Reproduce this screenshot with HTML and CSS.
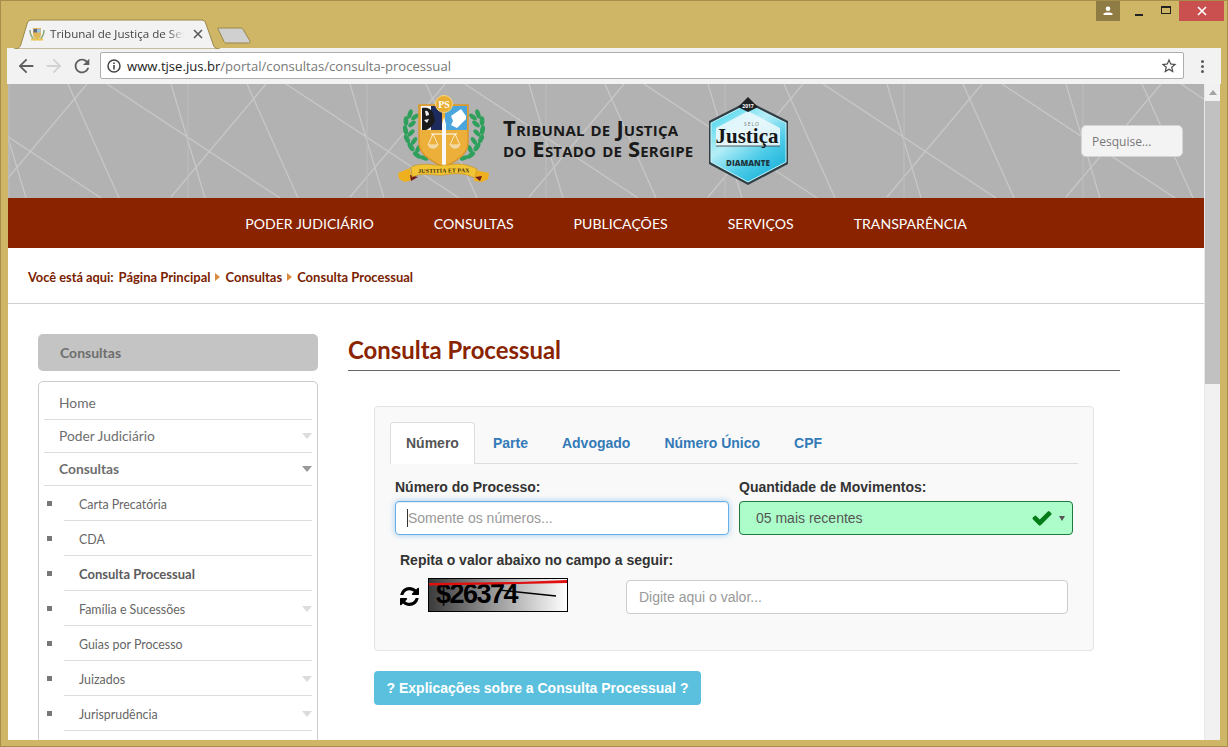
FILE: index.html
```html
<!DOCTYPE html>
<html lang="pt-BR">
<head>
<meta charset="utf-8">
<title>Tribunal de Justiça de Sergipe</title>
<link rel="stylesheet" href="styles.css">
</head>
<body>
<div class="window">
  <div class="titlebar">
    <div class="tab">
      <svg class="tab-shape" viewBox="0 0 206 30"><path d="M0 30C5 30 6 28 7 25L13 5C14 2 15 1 18 1H187C190 1 191 2 192 5L199 25C200 28 201 30 206 30Z" fill="#f2f2f2" stroke="#9a8749"/></svg>
      <svg class="favicon" viewBox="0 0 16 16"><path d="M1 4c0 5 2 8 5 10M15 4c0 5-2 8-5 10" fill="none" stroke="#8aa878" stroke-width="1.500"/><path d="M4 2h8v7c0 2-2 3-4 5-2-2-4-3-4-5z" fill="#e0b85a"/><path d="M4.500 3H8v3.500H4.500z" fill="#666a80"/><path d="M8 3h3.500v3.500H8z" fill="#9cc4e0"/><path d="M2 12.500h12v2H2z" fill="#e6c450"/></svg>
      <span class="tab-title">Tribunal de Justiça de Ser</span>
      <svg class="tab-close" viewBox="0 0 10 10"><path d="M1 1l8 8M9 1l-8 8" stroke="#5a5a5a" stroke-width="1.600"/></svg>
    </div>
    <svg class="newtab" viewBox="0 0 34 17"><path d="M1 1H24C25 1 26 2 26.500 3L33 14C33.500 15.500 33 16 31.500 16H9C8 16 7.500 15.500 7 14.500L1 2C.7 1.400 .6 1 1 1Z" fill="#d0d0d0" stroke="#9a8749"/></svg>
    <div class="winctl">
      <div class="account"><svg viewBox="0 0 10 10" width="10" height="10"><circle cx="5" cy="2.800" r="2.300" fill="#fff"/><path d="M0.500 9V7.500C1.500 6 8.500 6 9.500 7.500V9Z" fill="#fff"/></svg></div>
      <div class="ctl min"><span></span></div>
      <div class="ctl max"><span></span></div>
      <div class="close"><svg viewBox="0 0 10 10" width="10" height="10"><path d="M1 1l8 8M9 1l-8 8" stroke="#fff" stroke-width="1.700"/></svg></div>
    </div>
  </div>

  <div class="toolbar">
    <button class="tool"><svg viewBox="0 0 24 24" width="22" height="22"><path fill="#5f5f5f" d="M20 11H7.830l5.590-5.590L12 4l-8 8 8 8 1.410-1.410L7.830 13H20v-2z"/></svg></button>
    <button class="tool"><svg viewBox="0 0 24 24" width="22" height="22"><path fill="#d2d2d2" d="M4 11h12.170l-5.590-5.590L12 4l8 8-8 8-1.410-1.410L16.170 13H4v-2z"/></svg></button>
    <button class="tool"><svg viewBox="0 0 24 24" width="22" height="22"><path fill="#5f5f5f" d="M17.650 6.350C16.200 4.900 14.210 4 12 4c-4.420 0-7.990 3.580-7.990 8s3.570 8 7.990 8c3.730 0 6.840-2.550 7.730-6h-2.080c-.82 2.330-3.040 4-5.650 4-3.310 0-6-2.690-6-6s2.690-6 6-6c1.660 0 3.140.69 4.220 1.780L13 11h7V4l-2.350 2.350z"/></svg></button>
    <div class="omnibox">
      <svg class="info" viewBox="0 0 14 14" width="14" height="14"><circle cx="7" cy="7" r="6" fill="none" stroke="#444" stroke-width="1.500"/><path d="M6.200 6h1.600v4.500H6.200zM6.200 3.400h1.600V5H6.200z" fill="#444"/></svg>
      <span class="url"><b>www.tjse.jus.br</b>/portal/consultas/consulta-processual</span>
      <svg class="star" viewBox="0 0 24 24" width="18" height="18"><path fill="#4c4c4c" d="M22 9.240l-7.190-.62L12 2 9.190 8.630 2 9.240l5.460 4.730L5.820 21 12 17.270 18.180 21l-1.630-7.030L22 9.240zM12 15.400l-3.760 2.270 1-4.280-3.320-2.880 4.380-.38L12 6.100l1.710 4.040 4.380.38-3.320 2.880 1 4.280L12 15.400z"/></svg>
    </div>
    <div class="menu"><i></i><i></i><i></i></div>
  </div>

  <div class="viewport">
    <div class="page">
      <header class="masthead">
        <svg class="pattern" width="100%" height="114">
          <defs>
            <g id="tile" stroke="#c8c8c8" stroke-width="1.200" fill="none">
              <path d="M60 -4L111 110M79 -4L-16 109M99 -4L272 110M163 -4L197 110"/>
              <path d="M180 -4V110" stroke="#bcbcbc"/>
            </g>
            <pattern id="lines" width="179" height="114" patternUnits="userSpaceOnUse">
              <use href="#tile" x="0" y="4"/>
              <use href="#tile" x="-179" y="4"/>
              <use href="#tile" x="179" y="4"/>
            </pattern>
          </defs>
          <rect width="100%" height="114" fill="url(#lines)"/>
        </svg>
        <svg class="crest" viewBox="0 0 105 100" width="105" height="100">
          <g fill="#2ea05c">
            <g id="laurel">
              <ellipse cx="15" cy="24" rx="2.300" ry="4.800" transform="rotate(20 15 24)"/><ellipse cx="20" cy="27" rx="2.200" ry="4.500" transform="rotate(50 20 27)"/>
              <ellipse cx="11" cy="31" rx="2.400" ry="4.800"/><ellipse cx="17" cy="34" rx="2.200" ry="4.500" transform="rotate(50 17 34)"/>
              <ellipse cx="10.500" cy="40" rx="2.400" ry="4.800" transform="rotate(-10 10.500 40)"/><ellipse cx="16" cy="43" rx="2.200" ry="4.500" transform="rotate(45 16 43)"/>
              <ellipse cx="12" cy="49" rx="2.400" ry="4.800" transform="rotate(-25 12 49)"/><ellipse cx="19" cy="51" rx="2.200" ry="4.500" transform="rotate(35 19 51)"/>
              <ellipse cx="16" cy="57" rx="2.400" ry="4.800" transform="rotate(-35 16 57)"/><ellipse cx="23" cy="59" rx="2.200" ry="4.500" transform="rotate(25 23 59)"/>
              <ellipse cx="22" cy="65" rx="2.400" ry="4.800" transform="rotate(-50 22 65)"/><ellipse cx="29" cy="68" rx="2.200" ry="4.500" transform="rotate(-70 29 68)"/>
            </g>
            <use href="#laurel" transform="matrix(-1 0 0 1 98 0)"/>
          </g>
          <path d="M24 15H73V53C73 65 60 71 49 78C38 71 24 65 24 53Z" fill="#ecb03a" stroke="#d8962c" stroke-width="1.500"/>
          <path d="M26 16H47V40H26Z" fill="#f4f4f4"/>
          <path d="M36 16H47V40H36Z" fill="#1d2a5e"/>
          <path d="M27 18C31 17 36 18 38 23L40 31C38 35 36 38 31 40H27Z" fill="#1b1b1b"/>
          <path d="M30 21C32 20 34 22 34 25L31 26ZM29 30L34 29L32 33Z" fill="#eee"/>
          <path d="M50 16H72V40H50Z" fill="#4aa5dc"/>
          <path d="M56 26L66 19L71 26V29L62 38L56 35L58 31Z" fill="#fff"/>
          <path d="M47 34L49 27L51 34V74L49 77L47 74Z" fill="#f8f8f8"/>
          <path d="M36 44H62" stroke="#fff" stroke-width="1"/>
          <path d="M38 44L33 55H43ZM60 44L55 55H65Z" fill="none" stroke="#fff" stroke-width=".7"/>
          <path d="M33 55C34 60 42 60 43 55ZM55 55C56 60 64 60 65 55Z" fill="#f1d8a0"/>
          <circle cx="49" cy="14" r="8.500" fill="#e8ae32" stroke="#f7d77f"/>
          <text class="crest-ps" x="49" y="18">PS</text>
          <path d="M3 83L15 78L17 90L10 92L4 89Z M94 83L80 80L79 91L87 92L93 89Z" fill="#efb020"/>
          <path d="M15 85L23 87L16 91ZM80 87L87 86L85 91Z" fill="#6e1a1a"/>
          <path d="M16 77C30 71 40 77 52 75C64 73 72 74 82 79L80 88C70 83 62 83 52 84.500C40 87 30 81 17 87Z" fill="#f0c435" stroke="#c98e1b" stroke-width=".6"/>
          <text class="crest-motto" x="49" y="82.500" transform="rotate(-1 49 83)">JUSTITIA ET PAX</text>
        </svg>
        <div class="brand"><span>Tribunal de Justiça</span><span>do Estado de Sergipe</span></div>
        <svg class="seal" viewBox="0 0 95 100" width="95" height="100">
          <defs>
            <linearGradient id="gem" x1="0" y1="0" x2="0.700" y2="1">
              <stop offset="0" stop-color="#30d0ea"/><stop offset=".45" stop-color="#b5eef7"/><stop offset=".75" stop-color="#4ccbe8"/><stop offset="1" stop-color="#1fb4da"/>
            </linearGradient>
          </defs>
          <path d="M48 11L88 31V74L48 95L9 74V31Z" fill="#2f3f45"/>
          <path d="M48 14L86 33V72L48 92L11 72V33Z" fill="url(#gem)" stroke="#c9f5fb"/>
          <path d="M16 38L48 21L80 38V56H16Z" fill="#eef9fb" opacity=".85"/>
          <path d="M38 17L48 7L58 17L48 22Z" fill="#1e2224"/>
          <text class="seal-year" x="48" y="18">2017</text>
          <text class="seal-selo" x="52" y="36">SELO</text>
          <text class="seal-name" x="47" y="53">Justiça</text>
          <path d="M16 56H80" stroke="#333" stroke-width=".8"/>
          <text class="seal-dia" x="48" y="76">DIAMANTE</text>
        </svg>
        <input class="search" type="text" placeholder="Pesquise...">
      </header>

      <nav class="mainnav">
        <a>PODER JUDICIÁRIO</a><a>CONSULTAS</a><a>PUBLICAÇÕES</a><a>SERVIÇOS</a><a>TRANSPARÊNCIA</a>
      </nav>

      <div class="crumbs">
        <span class="here">Você está aqui:</span>
        <a>Página Principal</a><i></i><a>Consultas</a><i></i><a>Consulta Processual</a>
      </div>

      <div class="content">
        <aside class="sidebar">
          <h3 class="side-title">Consultas</h3>
          <ul class="side-menu">
            <li class="row">Home</li>
            <li class="row more">Poder Judiciário</li>
            <li class="row more open">Consultas</li>
            <li class="row sub">Carta Precatória</li>
            <li class="row sub">CDA</li>
            <li class="row sub current">Consulta Processual</li>
            <li class="row sub more">Família e Sucessões</li>
            <li class="row sub">Guias por Processo</li>
            <li class="row sub more">Juizados</li>
            <li class="row sub more">Jurisprudência</li>
          </ul>
        </aside>

        <main class="main">
          <h1 class="page-title">Consulta Processual</h1>
          <section class="panel">
            <div class="tabs">
              <a class="active">Número</a><a>Parte</a><a>Advogado</a><a>Número Único</a><a>CPF</a>
            </div>
            <div class="fields">
              <div class="field">
                <label>Número do Processo:</label>
                <div class="focus-wrap"><input class="control focus" type="text" placeholder="Somente os números..."></div>
              </div>
              <div class="field">
                <label>Quantidade de Movimentos:</label>
                <div class="select-ok">
                  <span>05 mais recentes</span>
                  <svg viewBox="0 0 1792 1792" width="22" height="22"><path fill="#047c17" d="M1671 566q0 40-28 68l-724 724-136 136q-28 28-68 28t-68-28l-136-136-362-362q-28-28-28-68t28-68l136-136q28-28 68-28t68 28l294 295 656-657q28-28 68-28t68 28l136 136q28 28 28 68z"/></svg>
                  <em></em>
                </div>
              </div>
            </div>
            <p class="captcha-label">Repita o valor abaixo no campo a seguir:</p>
            <div class="captcha-row">
              <svg class="refresh" viewBox="0 0 1536 1536" width="19" height="19"><path fill="#000" d="M1511 928q0 5-1 7-64 268-268 434.500t-478 166.500q-146 0-282.500-55t-243.500-157l-129 129q-19 19-45 19t-45-19-19-45v-448q0-26 19-45t45-19h448q26 0 45 19t19 45-19 45l-137 137q71 66 161 102t187 36q134 0 250-65t186-179q11-17 53-117 8-23 30-23h192q13 0 22.500 9.500t9.500 22.500zm25-800v448q0 26-19 45t-45 19h-448q-26 0-45-19t-19-45 19-45l138-138q-148-137-349-137-134 0-250 65t-186 179q-11 17-53 117-8 23-30 23h-199q-13 0-22.500-9.500t-9.500-22.500v-7q65-268 270-434.500t480-166.500q146 0 284 55.500t245 156.500l130-129q19-19 45-19t45 19 19 45z"/></svg>
              <div class="captcha">
                <span>$26374</span>
                <svg viewBox="0 0 138 32" width="138" height="32"><path d="M0 4L90 3L138 1V4L90 5L0 6.500Z" fill="#e01010"/><path d="M70 11L127 17" stroke="#000" stroke-width="1.400"/></svg>
              </div>
              <input class="control value" type="text" placeholder="Digite aqui o valor...">
            </div>
          </section>
          <a class="help">? Explicações sobre a Consulta Processual ?</a>
        </main>
      </div>
    </div>
    <div class="scrollbar">
      <div class="sb-up"></div>
      <div class="sb-thumb"></div>
    </div>
  </div>
</div>
</body>
</html>
```
FILE: styles.css
```css
* { box-sizing: border-box; }
html, body { margin: 0; padding: 0; height: 100%; overflow: hidden; }
ul, h1, h3, p { margin: 0; padding: 0; }
ul { list-style: none; }

.window {
  width: 1228px; height: 747px;
  background: #cfb566;
  border: 1px solid #a68f4c;
  padding: 0 6px;
  display: flex; flex-direction: column;
  font-family: Lato, sans-serif;
}

/* browser title bar */
.titlebar { height: 47px; flex: none; display: flex; align-items: flex-end; position: relative; }
.tab {
  width: 206px; height: 30px; margin-left: 7px; margin-bottom: -1px;
  position: relative; z-index: 1;
  display: flex; align-items: center; padding: 0 0 1px 15px;
}
.tab-shape { position: absolute; left: 0; top: 0; width: 206px; height: 30px; }
.favicon { position: relative; width: 16px; height: 16px; flex: none; }
.tab-title {
  position: relative; width: 134px; margin-left: 5px; white-space: nowrap;
  font-size: 11.600px; color: #444; font-family: "Open Sans", sans-serif;
  -webkit-mask-image: linear-gradient(to right, #000 88%, transparent);
  mask-image: linear-gradient(to right, #000 88%, transparent);
}
.tab-close { position: relative; width: 10px; height: 10px; margin-left: 9px; flex: none; }
.newtab { width: 34px; height: 17px; align-self: flex-start; margin: 26px 0 0 -3px; flex: none; }
.winctl { margin-left: auto; align-self: flex-start; display: flex; margin-right: -3px; }
.account { width: 24px; height: 20px; background: #8f7c45; display: flex; align-items: center; justify-content: center; }
.ctl { width: 27px; height: 20px; display: flex; align-items: center; justify-content: center; }
.min { margin-left: 5px; }
.min span { width: 8px; height: 2px; background: #222; margin-top: 7px; }
.max span { width: 10px; height: 8px; border: 1px solid #222; border-top-width: 2px; margin-top: -3px; }
.close { width: 45px; height: 20px; background: #c9504f; display: flex; align-items: center; justify-content: center; }

/* browser toolbar */
.toolbar { height: 36px; flex: none; background: #f2f2f2; display: flex; align-items: center; padding-left: 5px; }
.tool { width: 28px; height: 28px; padding: 0; border: 0; background: none; display: flex; align-items: center; justify-content: center; }
.omnibox {
  flex: 1; height: 27px; margin-left: 4px; margin-top: -1px;
  background: #fff; border: 1px solid #adadad; border-radius: 2px;
  display: flex; align-items: center; padding: 0 5px 0 6px;
}
.url { margin-left: 6px; font-size: 13.100px; color: #777; white-space: nowrap; font-family: "Open Sans", sans-serif; }
.url b { font-weight: 400; color: #222; }
.star { margin-left: auto; }
.menu { width: 37px; display: flex; flex-direction: column; align-items: center; gap: 2px; }
.menu i { width: 3px; height: 3px; background: #5a5a5a; border-radius: 50%; }

/* viewport */
.viewport { width: 1212px; height: 656px; margin-left: 1px; display: flex; flex: none; overflow: hidden; background: #fff; }
.page { width: 1196px; flex: none; overflow: hidden; }
.scrollbar { width: 16px; flex: none; background: #f1f1f1; border-left: 1px solid #e8e8e8; }
.sb-up { height: 17px; position: relative; }
.sb-up::after { content: ""; position: absolute; left: 4px; top: 6px; border: 4px solid transparent; border-top: 0; border-bottom: 5px solid #a3a3a3; }
.sb-thumb { height: 283px; background: #c1c1c1; }

/* masthead */
.masthead {
  height: 114px; background: #b2b2b2; position: relative;
  display: flex; align-items: flex-start; padding: 6px 0 0 387px;
}
.pattern { position: absolute; left: 0; top: 0; }
.crest, .seal, .brand, .search { position: relative; }
.crest { flex: none; }
.crest-ps { font: 700 10px "Liberation Serif", serif; fill: #fff; text-anchor: middle; }
.crest-motto { font: 700 5.800px "Liberation Serif", serif; fill: #3a2a10; text-anchor: middle; letter-spacing: .2px; }
.brand {
  width: 198px; margin: 27px 0 0 3px; flex: none;
  display: flex; flex-direction: column;
  font: 700 22px/21px "Open Sans", sans-serif; font-variant: small-caps; color: #1a1a1a;
  white-space: nowrap; letter-spacing: .2px;
}
.seal { flex: none; margin-left: -1px; }
.seal-year { font: 700 5px "Open Sans", sans-serif; fill: #fff; text-anchor: middle; }
.seal-selo { font: 400 5px "Open Sans", sans-serif; fill: #777; text-anchor: middle; letter-spacing: 1px; }
.seal-name { font: 700 21px "Liberation Serif", serif; fill: #161616; text-anchor: middle; }
.seal-dia { font: 800 8px "Open Sans", sans-serif; fill: #1d3640; text-anchor: middle; }
.search {
  width: 102px; height: 32px; margin: 35px 0 0 286px; padding: 0 10px;
  background: #f3f3f3; border: 1px solid #d4d4d4; border-radius: 5px;
  font: 12px "Open Sans", sans-serif; outline: 0;
}
.search::placeholder { color: #777; opacity: 1; }

/* main navigation */
.mainnav { height: 50px; background: #8a2300; display: flex; align-items: center; justify-content: center; gap: 60px; }
.mainnav a { color: #fff; font-size: 14.100px; white-space: nowrap; }

/* breadcrumb */
.crumbs {
  height: 56px; padding: 3px 0 0 20px; border-bottom: 1px solid #cfcfcf;
  display: flex; align-items: center;
  font-size: 13px; font-weight: 700; color: #7a2200; white-space: nowrap;
}
.here { margin-right: 5px; font-size: 12.800px; }
.crumbs i { width: 0; height: 0; margin: 0 5px 0 5px; border: 4px solid transparent; border-right: 0; border-left: 5px solid #d98a3c; }

/* layout */
.content { display: flex; gap: 30px; padding: 30px 84px 0 30px; }
.sidebar { width: 280px; flex: none; }
.main { flex: 1; min-width: 0; }

/* sidebar */
.side-title { height: 37px; padding-left: 22px; background: #c4c4c4; border-radius: 5px; font-size: 14px; font-weight: 700; line-height: 38px; color: #6e6e6e; }
.side-menu { margin-top: 10px; height: 400px; padding: 5px 5px 0; border: 1px solid #cbcbcb; border-radius: 5px 5px 0 0; }
.row {
  height: 33px; border-bottom: 1px solid #ddd; padding: 0 0 1px 15px;
  display: flex; align-items: center; justify-content: space-between;
  font-size: 13.800px; color: #6e6e6e; position: relative;
}
.row.open { font-weight: 700; }
.more::after { content: ""; border: 5.500px solid transparent; border-bottom: 0; border-top: 6px solid #dcdcdc; }
.more.open::after { border-top-color: #999; }
.sub { height: 35px; margin-left: 20px; font-size: 12.400px; color: #666; padding-top: 3px; }
.sub::before { content: ""; position: absolute; left: -17px; top: 15px; width: 5px; height: 5px; background: #777; }
.sub.current { font-size: 13px; font-weight: 700; color: #5c5c5c; padding-top: 2px; }

/* content */
.page-title { height: 37px; border-bottom: 1px solid #666; font-size: 23.900px; font-weight: 700; line-height: 32px; color: #8a2300; white-space: nowrap; }
.panel {
  width: 720px; height: 245px; margin: 35px 0 0 26px; padding: 15px;
  background: #f9f9f9; border: 1px solid #e4e4e4; border-radius: 4px;
  font-family: "Liberation Sans", sans-serif;
}
.tabs { display: flex; height: 42px; border-bottom: 1px solid #ddd; font-size: 14px; font-weight: 700; color: #337ab7; }
.tabs a { padding: 0 15px; height: 42px; border: 1px solid transparent; border-bottom: 0; margin-right: 2px; line-height: 41px; white-space: nowrap; }
.tabs .active { color: #555; background: #fff; border-color: #ddd; border-radius: 4px 4px 0 0; }

.fields { display: grid; grid-template-columns: 334px 334px; gap: 10px; padding: 14px 0 0 5px; }
.field label { display: block; height: 23px; font-size: 14px; font-weight: 700; line-height: 19px; color: #333; }
.control {
  height: 34px; padding: 0 12px; background: #fff; border: 1px solid #ccc; border-radius: 4px;
  font: 14px "Liberation Sans", sans-serif; outline: 0;
}
.control::placeholder { color: #999; opacity: 1; }
.focus-wrap { position: relative; }
.focus-wrap::after { content: ""; position: absolute; left: 12px; top: 8px; width: 1px; height: 18px; background: #333; }
.focus { width: 100%; border-color: #66afe9; box-shadow: inset 0 1px 1px rgba(0,0,0,.075), 0 0 6px rgba(102,175,233,.6); }
.select-ok {
  height: 34px; display: flex; align-items: center; padding: 0 7px 0 16px;
  background: #acfdc9; border: 1px solid #1f7a3f; border-radius: 4px; font-size: 14px; color: #555;
}
.select-ok svg { margin-left: auto; }
.select-ok em { margin-left: 6px; border: 3px solid transparent; border-bottom: 0; border-top: 5px solid #555; }
.captcha-label { margin: 16px 0 0 10px; font-size: 14px; font-weight: 700; line-height: 19px; color: #333; }
.captcha-row { display: flex; align-items: flex-start; padding: 8px 0 0 10px; }
.refresh { margin: 9px 9px 0 0; flex: none; }
.captcha {
  width: 140px; height: 34px; flex: none; position: relative; overflow: hidden;
  border: 1px solid #000; background: linear-gradient(to right, #3c3c3c, #fff);
  font: 700 27px/31px "Liberation Sans", sans-serif; color: #000; letter-spacing: -1.500px; padding-left: 7px;
}
.captcha svg { position: absolute; left: 0; top: 0; }
.value { width: 442px; margin: 2px 0 0 58px; }

.help {
  display: block; width: 327px; height: 34px; margin: 20px 0 0 26px;
  background: #5bc0de; border-radius: 4px; text-align: center;
  font: 700 14px/34px "Liberation Sans", sans-serif; color: #fff; white-space: nowrap;
}
```
